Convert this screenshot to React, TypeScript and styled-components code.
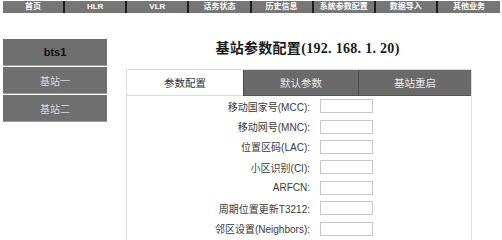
import React, { FC } from 'react';
import styled, { createGlobalStyle } from 'styled-components';

const GlobalStyle = createGlobalStyle`
  body {
    margin: 0;
    background: #ffffff;
    font-family: 'Liberation Sans', 'Noto Sans CJK SC', sans-serif;
  }
`;

const Page = styled.div`
  padding: 1px 2px 0 3px;
  width: 497px;
`;

const NavBar = styled.div`
  display: grid;
  grid-template-columns: repeat(8, 1fr);
  height: 12px;
  background: #767676;
`;

const NavItem = styled.div`
  display: flex;
  align-items: center;
  justify-content: center;
  border-right: 2px solid #1e1e1e;
  color: #ffffff;
  font-size: 8px;
  font-weight: bold;
  line-height: 12px;
  &:last-child {
    border-right: none;
  }
`;

const Main = styled.div`
  display: flex;
  margin-top: 26px;
`;

const Sidebar = styled.div`
  display: flex;
  flex-direction: column;
  gap: 1px;
  width: 104px;
`;

const SideItem = styled.div<{ active?: boolean }>`
  height: 26px;
  display: flex;
  align-items: center;
  justify-content: center;
  background: #6f6f6f;
  border-bottom: 1px solid #9a9a9a;
  color: ${({ active }) => (active ? '#111111' : '#dcdcdc')};
  font-size: ${({ active }) => (active ? '11px' : '10px')};
  font-weight: ${({ active }) => (active ? 'bold' : 'normal')};
`;

const Content = styled.div`
  display: flex;
  flex-direction: column;
  margin-left: 19px;
  width: 346px;
`;

const Title = styled.h1`
  margin: 2px 0 0 17px;
  height: 28px;
  text-align: center;
  font-family: 'Liberation Serif', 'Noto Sans CJK SC', serif;
  font-size: 14px;
  font-weight: bold;
  color: #1a1a1a;
  line-height: 16px;
  letter-spacing: 0.3px;
`;

const Panel = styled.div`
  border: 1px solid #dcdcdc;
  border-bottom: none;
  height: 172px;
`;

const Tabs = styled.div`
  display: grid;
  grid-template-columns: 116px 115px 1fr;
  height: 26px;
`;

const Tab = styled.div<{ active?: boolean }>`
  display: flex;
  align-items: center;
  justify-content: center;
  background: ${({ active }) => (active ? '#ffffff' : '#6a6a6a')};
  border-bottom: 1px solid ${({ active }) => (active ? '#dcdcdc' : '#555555')};
  border-left: ${({ active }) => (active ? 'none' : '1px solid #4a4a4a')};
  color: ${({ active }) => (active ? '#333333' : '#e8e8e8')};
  font-size: 10.5px;
`;

const Form = styled.div`
  display: flex;
  flex-direction: column;
`;

const Row = styled.div`
  display: grid;
  grid-template-columns: 183px 53px;
  column-gap: 10px;
  align-items: center;
  height: 20.4px;
`;

const Label = styled.span`
  text-align: right;
  font-size: 10px;
  color: #3a3a3a;
  white-space: nowrap;
`;

const Field = styled.input`
  box-sizing: border-box;
  width: 53px;
  height: 14px;
  border: 1px solid #c8c8c8;
  padding: 0;
  background: #ffffff;
`;

const navItems = ['首页', 'HLR', 'VLR', '话务状态', '历史信息', '系统参数配置', '数据导入', '其他业务'];

const fields = [
  '移动国家号(MCC):',
  '移动网号(MNC):',
  '位置区码(LAC):',
  '小区识别(CI):',
  'ARFCN:',
  '周期位置更新T3212:',
  '邻区设置(Neighbors):',
];

const App: FC = () => (
  <>
    <GlobalStyle />
    <Page>
      <NavBar>
        {navItems.map((item) => (
          <NavItem key={item}>{item}</NavItem>
        ))}
      </NavBar>
      <Main>
        <Sidebar>
          <SideItem active>bts1</SideItem>
          <SideItem>基站一</SideItem>
          <SideItem>基站二</SideItem>
        </Sidebar>
        <Content>
          <Title>基站参数配置(192.&nbsp;168.&nbsp;1.&nbsp;20)</Title>
          <Panel>
            <Tabs>
              <Tab active>参数配置</Tab>
              <Tab>默认参数</Tab>
              <Tab>基站重启</Tab>
            </Tabs>
            <Form>
              {fields.map((f) => (
                <Row key={f}>
                  <Label>{f}</Label>
                  <Field type="text" />
                </Row>
              ))}
            </Form>
          </Panel>
        </Content>
      </Main>
    </Page>
  </>
);

export default App;
